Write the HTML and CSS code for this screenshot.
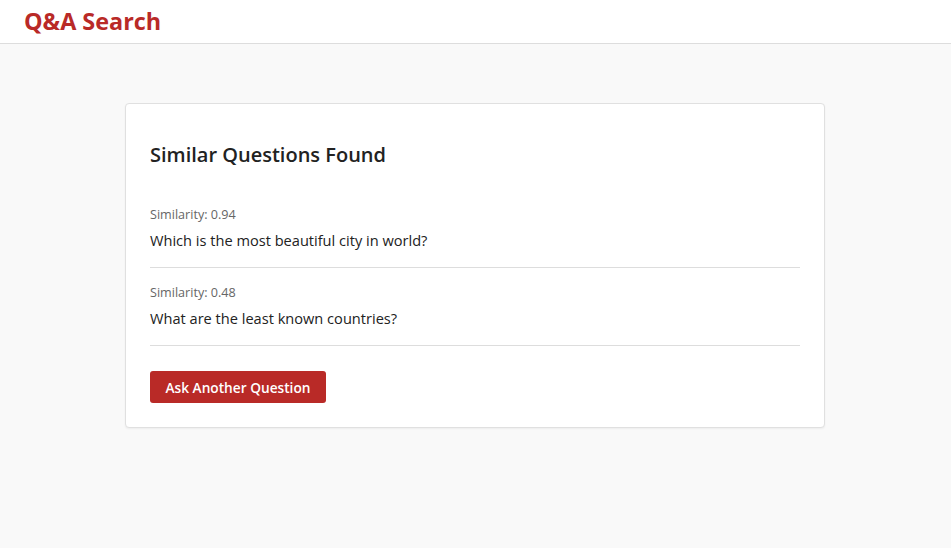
FILE: index.html
```html
<!DOCTYPE html>
<html lang="en">
<head>
<meta charset="utf-8">
<title>Q&amp;A Search</title>
<link rel="stylesheet" href="styles.css">
</head>
<body>
<header class="topbar">
  <h1 class="brand">Q&amp;A Search</h1>
</header>
<main class="main">
  <section class="card">
    <h2 class="card-title">Similar Questions Found</h2>
    <ul class="results">
      <li class="result">
        <div class="score">Similarity: 0.94</div>
        <div class="question">Which is the most beautiful city in world?</div>
      </li>
      <li class="result">
        <div class="score">Similarity: 0.48</div>
        <div class="question">What are the least known countries?</div>
      </li>
    </ul>
    <button class="btn" type="button">Ask Another Question</button>
  </section>
</main>
</body>
</html>
```
FILE: styles.css
```css
html, body {
  margin: 0;
  padding: 0;
}
body {
  background: #f9f9f9;
  font-family: "Open Sans", "Noto Sans", sans-serif;
  color: #333;
  min-height: 548px;
}
.topbar {
  background: #fff;
  border-bottom: 1px solid #ddd;
  height: 43px;
  padding: 0 24px;
  display: flex;
  align-items: center;
}
.brand {
  margin: 0;
  font-size: 23.4px;
  font-weight: 700;
  color: #b92a27;
  line-height: 1;
}
.main {
  padding: 59px 1px 0 0;
}
.card {
  box-sizing: border-box;
  width: 700px;
  margin: 0 auto;
  background: #fff;
  border: 1px solid #e0e0e0;
  border-radius: 4px;
  box-shadow: 0 1px 2px rgba(0,0,0,0.05);
  padding: 39px 24px 24px;
}
.card-title {
  margin: 0 0 23px;
  font-size: 20px;
  line-height: 24px;
  font-weight: 600;
  color: #222;
}
.results {
  list-style: none;
  margin: 0;
  padding: 0;
}
.result {
  padding: 16px 0 16px;
  border-bottom: 1px solid #ddd;
}
.score {
  font-size: 12.6px;
  line-height: 18px;
  color: #666;
}
.question {
  margin-top: 6px;
  font-size: 14.6px;
  line-height: 21px;
  color: #222;
}
.btn {
  margin-top: 25px;
  display: inline-block;
  height: 32px;
  padding: 0 15.5px;
  border: none;
  border-radius: 3px;
  background: #b92a27;
  color: #fff;
  font-family: inherit;
  font-size: 13.7px;
  font-weight: 600;
  cursor: pointer;
}
```
